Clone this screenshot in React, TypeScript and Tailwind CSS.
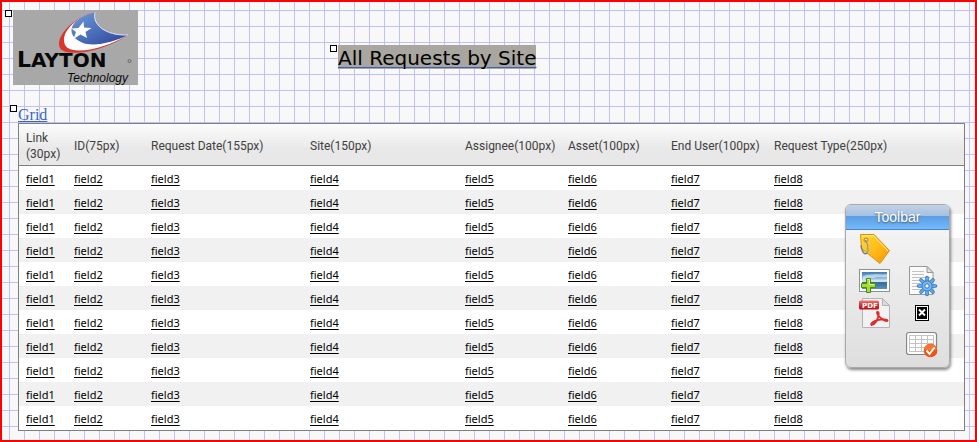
type Column = {
  label: string;
  field: string;
  width: string;
};

const columns: Column[] = [
  { label: "Link (30px)", field: "field1", width: "w-[48px]" },
  { label: "ID(75px)", field: "field2", width: "w-[77px]" },
  { label: "Request Date(155px)", field: "field3", width: "w-[159px]" },
  { label: "Site(150px)", field: "field4", width: "w-[155px]" },
  { label: "Assignee(100px)", field: "field5", width: "w-[103px]" },
  { label: "Asset(100px)", field: "field6", width: "w-[103px]" },
  { label: "End User(100px)", field: "field7", width: "w-[103px]" },
  { label: "Request Type(250px)", field: "field8", width: "w-auto" },
];

const rows = Array.from({ length: 11 }, (_, i) => i);

function Handle() {
  return <span className="block h-[7px] w-[7px] shrink-0 border border-black bg-white" />;
}

function Logo() {
  return (
    <svg viewBox="0 0 125 75" className="block h-[75px] w-[125px] shrink-0 bg-[#a8a8a8]" role="img" aria-label="Layton Technology">
      <defs>
        <linearGradient id="swoosh" x1="0" y1="0" x2="1" y2="1">
          <stop offset="0" stopColor="#6f9ad8" />
          <stop offset="0.5" stopColor="#4a70bb" />
          <stop offset="1" stopColor="#2e3f96" />
        </linearGradient>
      </defs>
      {/* red outer sweep */}
      <path d="M82 2.500C66 5 46 21 46 34c0 8 9 9.500 21 8.500C84 41 103 33 115 25 92 26 79 14 82 2.500Z" fill="#d9372d" />
      {/* white middle sweep */}
      <path d="M82 2.500C66 6 52 18 51 29c-.5 8 5 11.500 15 11.500 16 0 35-7.500 49-15.500C92 26 79 14 82 2.500Z" fill="#fff" />
      {/* blue body */}
      <path d="M82 2.500C79 14 92 26 115 25 101 32 82 37 70 33 60 29 56 22 60 15 64 9 73 4 82 2.500Z" fill="url(#swoosh)" />
      <path d="M82 2.500C79 14 92 26 115 25" fill="none" stroke="#e6ecf5" strokeWidth="0.900" />
      <path d="M70.500 11.500 71 17.500 78.500 18 72.500 22 74 28 67.500 24.500 60.500 29 63 22 58.500 18.500 65.500 18Z" fill="#fff" />
      <text x="4" y="57" fontFamily="DejaVu Sans" fontWeight="700" fill="#080808">
        <tspan fontSize="22">L</tspan>
        <tspan fontSize="20">AYTON</tspan>
      </text>
      <circle cx="116.500" cy="51" r="1.500" fill="none" stroke="#444" strokeWidth="0.600" />
      <text x="115" y="72" textAnchor="end" fontFamily="Liberation Sans" fontStyle="italic" fontSize="12" fill="#080808">
        Technology
      </text>
    </svg>
  );
}

function TagIcon() {
  return (
    <svg viewBox="0 0 32 32" className="h-8 w-8">
      <defs>
        <linearGradient id="tag" x1="0" y1="0" x2="1" y2="1">
          <stop offset="0" stopColor="#ffdc35" />
          <stop offset="0.6" stopColor="#ffb515" />
          <stop offset="1" stopColor="#f29400" />
        </linearGradient>
      </defs>
      <path d="M2.500 1.500 16 1.500 31.500 17.500 22 30.500 3.500 15.500Z" fill="url(#tag)" stroke="#d98e12" strokeLinejoin="round" />
      <path d="M4 2.800h11.500L30 18" fill="none" stroke="#fff09a" strokeWidth="1" />
      <circle cx="8" cy="7" r="2" fill="#fff3b8" stroke="#b9770d" />
      <path d="M7.500 7C10.500 10 11 17 8.500 20.500 6 22 3.500 17.500 3 12.500" fill="none" stroke="#777" strokeWidth="1.400" />
      <path d="M8.500 7.500C11 11 10.800 17 8.500 20" fill="none" stroke="#e4e4e4" strokeWidth="0.600" />
    </svg>
  );
}

function ImageAddIcon() {
  return (
    <svg viewBox="0 0 32 32" className="h-8 w-8">
      <defs>
        <linearGradient id="sky" x1="0" y1="0" x2="0" y2="1">
          <stop offset="0" stopColor="#3f7db4" />
          <stop offset="0.350" stopColor="#86b5d8" />
          <stop offset="0.550" stopColor="#e9f2f6" />
          <stop offset="0.620" stopColor="#2f6c9f" />
          <stop offset="1" stopColor="#5a94b9" />
        </linearGradient>
      </defs>
      <rect x="1.500" y="4.500" width="30" height="22" fill="#fff" stroke="#8d9296" />
      <rect x="4" y="7" width="25" height="17" fill="url(#sky)" />
      <path d="M5 11c5-2 9-1 12-2 4 0 8 1 12 0v3c-5 1-9-1-13 1-4 0-7 0-11 2Z" fill="#fff" opacity=".5" />
      <path d="M8.500 13.500h4v5h5v4h-5v5h-4v-5h-5v-4h5Z" fill="#a6dd30" stroke="#4d8a10" strokeLinejoin="round" />
      <path d="M9.500 14.500h2v5h5" fill="none" stroke="#ddf79b" />
    </svg>
  );
}

function PageGearIcon() {
  return (
    <svg viewBox="0 0 32 32" className="h-8 w-8">
      <path d="M3.500 1.500H21l6 6v22H3.500Z" fill="#fafafa" stroke="#989898" />
      <path d="M21 1.500v6h6Z" fill="#e1e1e1" stroke="#989898" strokeLinejoin="round" />
      <path d="M6 6.500h12M6 9.500h12M6 12.500h18M6 15.500h18M6 18.500h18M6 21.500h18M6 24.500h18" stroke="#c2c2c2" />
      <g stroke="#2f75bc" strokeWidth="3.600" strokeLinecap="round">
        <path d="M21 12.500v17M12.500 21h17M15 15l12 12M27 15 15 27" />
      </g>
      <g stroke="#62aaf0" strokeWidth="2" strokeLinecap="round">
        <path d="M21 12.500v17M12.500 21h17M15 15l12 12M27 15 15 27" />
      </g>
      <circle cx="21" cy="21" r="5" fill="#79b8f2" stroke="#3b82cc" />
      <circle cx="21" cy="21" r="2.200" fill="#eef5fb" stroke="#3474b5" />
    </svg>
  );
}

function PdfIcon() {
  return (
    <svg viewBox="0 0 32 32" className="h-8 w-8">
      <defs>
        <linearGradient id="pdf" x1="0" y1="0" x2="0" y2="1">
          <stop offset="0" stopColor="#ef7773" />
          <stop offset="0.500" stopColor="#d3302d" />
          <stop offset="1" stopColor="#b5100f" />
        </linearGradient>
      </defs>
      <path d="M4.500 1.500h20l7 7v22h-27Z" fill="#f2f2f2" stroke="#b3b3b3" />
      <path d="M24.500 1.500v7h7Z" fill="#dcdcdc" stroke="#b3b3b3" strokeLinejoin="round" />
      <rect x="1" y="3.500" width="20" height="9" rx="1.500" fill="url(#pdf)" />
      <text x="4" y="10.500" fontFamily="DejaVu Sans" fontWeight="700" fontSize="7" fill="#fff">
        PDF
      </text>
      <path d="M19.500 15c2 0 1 3 .5 5.500-1 3.500-4 7.500-6.500 7.500-1.500-1 2-4 6-4.800 4-1 10-1.200 10 .3-.5 1.500-4-.2-6.500-2.200-2.500-2-5-6-3.500-6.300Z" fill="none" stroke="#de2b2b" strokeWidth="1.900" strokeLinejoin="round" />
    </svg>
  );
}

function MissingIcon() {
  return (
    <svg viewBox="0 0 14 16" className="h-4 w-[14px]">
      <rect width="14" height="16" fill="#000" />
      <rect x="1" y="1" width="12" height="14" fill="#fff" />
      <rect x="2" y="2" width="10" height="12" fill="#000" />
      <path d="m4 4.500 6 6m0-6-6 6" stroke="#fff" strokeWidth="2" />
    </svg>
  );
}

function TableCheckIcon() {
  return (
    <svg viewBox="0 0 32 32" className="h-8 w-8">
      <rect x="0.500" y="3.500" width="30" height="22" rx="2.500" fill="#fdfdfd" stroke="#858585" strokeWidth="1.200" />
      <rect x="3.500" y="6.500" width="24" height="16" fill="#fff" stroke="#c3c3c3" />
      <path d="M3.500 10.500h24M3.500 14.500h24M3.500 18.500h24M9.500 6.500v16M15.500 6.500v16M21.500 6.500v16" stroke="#c3c3c3" />
      <circle cx="24.500" cy="21.500" r="6.800" fill="#ef5413" />
      <path d="M18 20a6.800 6.800 0 0 1 13 0c-4 2-9 2-13 0Z" fill="#ff8b45" opacity=".6" />
      <path d="m20.500 21.500 3 3.500 5-6.500" fill="none" stroke="#fff" strokeWidth="2" />
    </svg>
  );
}

const tools = [
  { name: "Label", icon: <TagIcon /> },
  null,
  { name: "Add image", icon: <ImageAddIcon /> },
  { name: "Page settings", icon: <PageGearIcon /> },
  { name: "PDF", icon: <PdfIcon /> },
  { name: "Close", icon: <MissingIcon /> },
  null,
  { name: "Apply grid", icon: <TableCheckIcon /> },
];

// Floats over the canvas
function Toolbar() {
  return (
    <aside className="absolute top-[202px] right-[25px] w-[105px] overflow-hidden rounded-md border border-[#aaa] bg-linear-to-b from-[#f7f7f7] to-[#dedede] pb-[6px] shadow-[1px_2px_3px_#0007]">
      <h2 className="h-[25px] border-b border-[#4486cc] bg-[linear-gradient(#c3d2e3,#a5c1e2_45%,#5b9fe2_48%,#74b9fc)] text-center font-['Liberation_Sans'] text-[14px] leading-6 text-white [text-shadow:0_1px_2px_#456]">
        Toolbar
      </h2>
      <div className="grid grid-cols-[32px_32px] gap-x-4 pt-[3px] pl-3">
        {tools.map((tool, i) =>
          tool ? (
            <button key={tool.name} type="button" aria-label={tool.name} className="flex h-8 w-8 items-center justify-center">
              {tool.icon}
            </button>
          ) : (
            <span key={i} />
          )
        )}
      </div>
    </aside>
  );
}

export default function App() {
  return (
    <main className="relative min-h-screen border-2 border-[#ff0000] bg-[#f8f8f8] bg-[linear-gradient(90deg,#bfc1f8_1px,transparent_1px),linear-gradient(#bfc1f8_1px,transparent_1px)] bg-[length:15px_16px] bg-[position:7px_8px] pt-2 pb-[9px]">
      <header className="flex items-start pl-[3px]">
        <div className="flex items-start gap-px">
          <Handle />
          <Logo />
        </div>
        <div className="mt-[35px] ml-[192px] flex items-start gap-px">
          <Handle />
          <h1 className="h-6 bg-[#a9a69f] pt-px font-['DejaVu_Sans'] text-[20px] leading-6 whitespace-nowrap text-black underline decoration-[#3b62b5] decoration-1 underline-offset-2">
            All Requests by Site
          </h1>
        </div>
      </header>

      <div className="mt-5 flex items-start gap-px pl-2">
        <Handle />
        <a href="#grid" className="h-[18px] font-['Liberation_Serif'] text-[16px] leading-5 text-[#3a64c8] underline underline-offset-1">
          Grid
        </a>
      </div>

      <div className="mr-[10px] ml-4 border border-[#7f7f7f] bg-white">
        <table id="grid" className="w-full table-fixed border-separate border-spacing-0 text-left">
          <thead>
            <tr className="h-[42px] bg-linear-to-b from-[#fcfcfc] to-[#e8e8e8] to-60%">
              {columns.map((col) => (
                <th key={col.field} scope="col" className={`${col.width} border-b border-[#7f7f7f] pt-[3px] pr-0 pb-0 pl-[7px] align-middle font-['Roboto'] text-[12px] leading-4 font-normal text-[#404040]`}>
                  {col.label}
                </th>
              ))}
            </tr>
          </thead>
          <tbody>
            {rows.map((row) => (
              <tr key={row} className="h-6 odd:bg-white even:bg-[#f1f1f1]">
                {columns.map((col) => (
                  <td key={col.field} className="pt-px pr-0 pb-0 pl-[7px] align-middle font-['Noto_Sans'] text-[11px] leading-4 text-black">
                    <a href="#grid" className="underline underline-offset-2">
                      {col.field}
                    </a>
                  </td>
                ))}
              </tr>
            ))}
          </tbody>
        </table>
      </div>

      <Toolbar />
    </main>
  );
}
